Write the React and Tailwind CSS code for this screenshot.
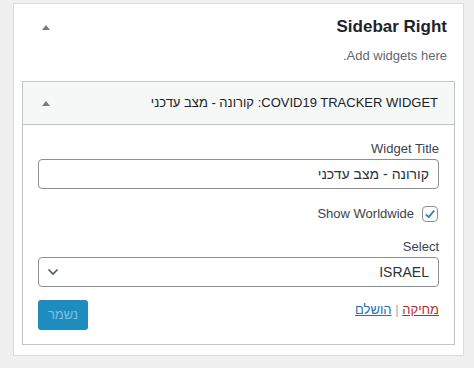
import {useState} from 'react';

const UpArrow = () => (
    <svg width="8" height="5" viewBox="0 0 8 5" className="block">
        <path d="M4 0 L8 5 L0 5 Z" fill="#787c82"/>
    </svg>
);

const App = () => {
    const [title, setTitle] = useState('קורונה - מצב עדכני');
    const [worldwide, setWorldwide] = useState(true);

    return (
        <div className="min-h-[368px] w-[474px] bg-[#f0f0f1] pt-[3px] pl-[13px] font-['Liberation_Sans',Arial,sans-serif] text-[13px] leading-[18px] text-[#3c434a]">
            {/* Sidebar box */}
            <div dir="rtl" className="w-[451px] border border-[#dcdcde] bg-white px-[8px] pt-[12px] pb-[10px]">
                <div className="flex items-center justify-between pr-[8px] pl-[20px]">
                    <h2 className="text-[17px] leading-[22px] font-bold text-[#1d2327]">Sidebar Right</h2>
                    <UpArrow/>
                </div>
                <p className="mt-[9px] pr-[8px] text-[#646970]">Add widgets here.</p>

                {/* Widget */}
                <div className="mt-[16px] border border-[#c3c4c7] bg-white">
                    <div className="flex items-center justify-between border-b border-[#c3c4c7] bg-[#f6f7f7] pr-[16px] pl-[19px] py-[12px]">
                        <span className="text-[#1d2327]">COVID19 TRACKER WIDGET: קורונה - מצב עדכני</span>
                        <UpArrow/>
                    </div>

                    <div className="px-[15px] pt-[15px] pb-[14px]">
                        <label className="block" dir="ltr">
                            <span className="block text-right">Widget Title</span>
                            <input
                                dir="rtl"
                                value={title}
                                onChange={(e) => setTitle(e.target.value)}
                                className="mt-[1px] block h-[30px] w-full rounded-[4px] border border-[#8c8f94] bg-white px-[9px] text-[14px] text-[#2c3338] outline-none"
                            />
                        </label>

                        <div className="mt-[16px] flex items-center gap-[8px] pr-[1px]">
                            <button
                                onClick={() => setWorldwide(!worldwide)}
                                className="flex h-[16px] w-[16px] items-center justify-center rounded-[4px] border border-[#8c8f94] bg-white"
                            >
                                {worldwide && (
                                    <svg width="16" height="16" viewBox="0 0 20 20">
                                        <path d="M4 10.5 L8.2 14.5 L16 5" fill="none" stroke="#3582c4" strokeWidth="2.8" strokeLinejoin="round"/>
                                    </svg>
                                )}
                            </button>
                            <span dir="ltr">Show Worldwide</span>
                        </div>

                        <div className="mt-[15px]" dir="ltr">
                            <span className="block text-right">Select</span>
                            <div dir="rtl" className="mt-[1px] flex h-[30px] w-full items-center justify-between rounded-[4px] border border-[#8c8f94] bg-white pr-[9px] pl-[8px] text-[14px] text-[#2c3338]">
                                <span>ISRAEL</span>
                                <svg width="12" height="8" viewBox="0 0 12 8">
                                    <path d="M1.5 1.5 L6 6 L10.5 1.5" fill="none" stroke="#50575e" strokeWidth="1.6"/>
                                </svg>
                            </div>
                        </div>

                        <div className="mt-[13px] flex items-start justify-between">
                            <div className="pt-[1px]">
                                <a href="#" className="text-[#b32d2e] underline">מחיקה</a>
                                <span className="text-[#a7aaad]"> | </span>
                                <a href="#" className="text-[#2271b1] underline">הושלם</a>
                            </div>
                            <button disabled className="h-[30px] w-[50px] rounded-[3px] bg-[#1e8cbe] text-[13px] text-[#7cc4e2]">
                                נשמר
                            </button>
                        </div>
                    </div>
                </div>
            </div>
        </div>
    );
};

export default App;
